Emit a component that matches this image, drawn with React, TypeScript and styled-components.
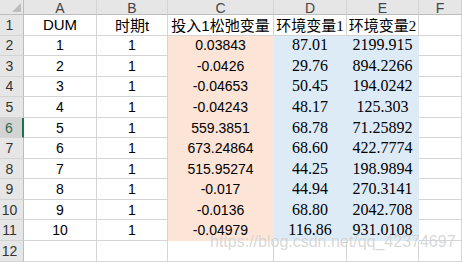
import React, { FC } from 'react';
import styled, { createGlobalStyle, css } from 'styled-components';

const GlobalStyle = createGlobalStyle`
  html, body {
    margin: 0;
    padding: 0;
    background: #fff;
    overflow: hidden;
  }
`;

const GRID = '#d4d4d4';
const HEAD_BG = '#e6e6e6';
const HEAD_LINE = '#bdbdbd';

const Sheet = styled.div`
  position: relative;
  display: grid;
  grid-template-columns: 24px 73px 71px 106px 73px 72px 1fr;
  grid-template-rows: 15px repeat(12, 20.55px);
  width: 462px;
  height: 262px;
  overflow: hidden;
`;

const Corner = styled.div`
  position: relative;
  background: ${HEAD_BG};
  border-right: 1px solid ${HEAD_LINE};
  border-bottom: 1px solid ${HEAD_LINE};
  box-sizing: border-box;

  &::after {
    content: '';
    position: absolute;
    right: 2px;
    bottom: 2px;
    border-left: 9px solid transparent;
    border-bottom: 9px solid #bdbdbd;
  }
`;

const ColHead = styled.div`
  display: flex;
  align-items: center;
  justify-content: center;
  box-sizing: border-box;
  background: ${HEAD_BG};
  border-right: 1px solid ${GRID};
  border-bottom: 1px solid ${HEAD_LINE};
  font: 14px 'Liberation Sans', sans-serif;
  color: #444;
  line-height: 1;
  padding-top: 1px;
`;

const RowHead = styled.div<{ $active?: boolean }>`
  display: flex;
  align-items: center;
  justify-content: center;
  box-sizing: border-box;
  padding-right: 4px;
  background: ${(p) => (p.$active ? '#d3d3d3' : HEAD_BG)};
  border-right: ${(p) => (p.$active ? '2px solid #217346' : `1px solid ${HEAD_LINE}`)};
  border-bottom: 1px solid ${GRID};
  font: 14px 'Liberation Sans', sans-serif;
  color: ${(p) => (p.$active ? '#2f6b4d' : '#333')};
`;

type Fill = 'none' | 'peach' | 'blue';
const FILLS: Record<Fill, string> = {
  none: '#fff',
  peach: '#fce4d6',
  blue: '#ddebf7',
};

const Cell = styled.div<{ $fill: Fill; $serif?: boolean; $title?: boolean }>`
  display: flex;
  align-items: center;
  justify-content: center;
  box-sizing: border-box;
  white-space: nowrap;
  overflow: visible;
  color: #000;
  background: ${(p) => FILLS[p.$fill]};
  border-right: 1px solid ${(p) => (p.$fill === 'none' ? GRID : FILLS[p.$fill])};
  border-bottom: 1px solid ${(p) => (p.$fill === 'none' ? GRID : FILLS[p.$fill])};
  ${(p) =>
    p.$serif
      ? css`
          font-family: 'Liberation Serif', 'Noto Sans CJK SC', serif;
          font-size: ${p.$title ? '15px' : '16px'};
        `
      : css`
          font-family: 'Liberation Sans', 'Noto Sans CJK SC', sans-serif;
          font-size: ${p.$title ? '15px' : '14px'};
        `}
`;

const Watermark = styled.div`
  position: absolute;
  left: 210px;
  top: 233px;
  font: 16px/18px 'Liberation Sans', sans-serif;
  color: rgba(175, 175, 175, 0.5);
  text-shadow: 0 0 1px rgba(255, 255, 255, 0.8);
  white-space: nowrap;
  pointer-events: none;
`;

const COLS = ['A', 'B', 'C', 'D', 'E', 'F'];

const ROWS: string[][] = [
  ['DUM', '时期t', '投入1松弛变量', '环境变量1', '环境变量2'],
  ['1', '1', '0.03843', '87.01', '2199.915'],
  ['2', '1', '-0.0426', '29.76', '894.2266'],
  ['3', '1', '-0.04653', '50.45', '194.0242'],
  ['4', '1', '-0.04243', '48.17', '125.303'],
  ['5', '1', '559.3851', '68.78', '71.25892'],
  ['6', '1', '673.24864', '68.60', '422.7774'],
  ['7', '1', '515.95274', '44.25', '198.9894'],
  ['8', '1', '-0.017', '44.94', '270.3141'],
  ['9', '1', '-0.0136', '68.80', '2042.708'],
  ['10', '1', '-0.04979', '116.86', '931.0108'],
  ['', '', '', '', ''],
];

// 填充色只在数据区 (第2~11行)
const fillOf = (r: number, c: number): Fill => {
  if (r === 0 || r > 10) return 'none';
  if (c === 2) return 'peach';
  if (c === 3 || c === 4) return 'blue';
  return 'none';
};

const App: FC = () => (
  <>
    <GlobalStyle />
    <Sheet>
      <Corner />
      {COLS.map((c) => (
        <ColHead key={c}>{c}</ColHead>
      ))}
      {ROWS.map((row, r) => (
        <React.Fragment key={r}>
          <RowHead $active={r === 5}>{r + 1}</RowHead>
          {row.map((v, c) => (
            <Cell key={c} $fill={fillOf(r, c)} $serif={c >= 3} $title={r === 0}>
              {v}
            </Cell>
          ))}
          <Cell $fill="none" />
        </React.Fragment>
      ))}
      <Watermark>https://blog.csdn.net/qq_42374697</Watermark>
    </Sheet>
  </>
);

export default App;
